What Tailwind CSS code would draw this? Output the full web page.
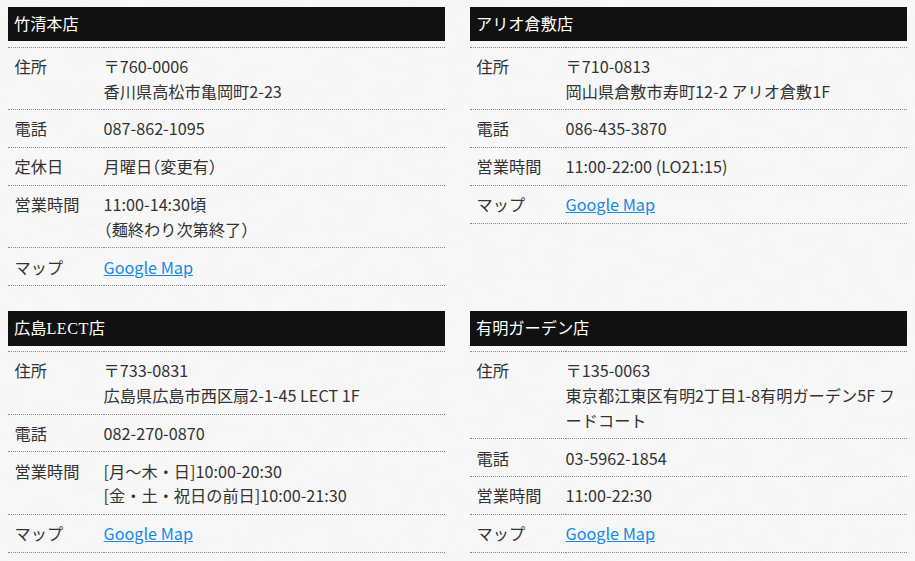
<!doctype html>
<html lang="ja">
<head>
<meta charset="UTF-8" />
<title>店舗情報</title>
<script src="https://cdn.jsdelivr.net/npm/@tailwindcss/browser@4"></script>
</head>
<body class="relative h-[561px] overflow-hidden bg-[#f8f8f8] font-['Noto_Sans_CJK_JP','Noto_Sans',sans-serif] text-[16.2px] leading-[24.6px] text-[#333]">
  <svg class="absolute inset-0 h-full w-full" aria-hidden="true">
    <filter id="paper" x="0" y="0" width="100%" height="100%">
      <feTurbulence type="fractalNoise" baseFrequency="0.04 0.06" numOctaves="4" seed="7" />
      <feColorMatrix values="0 0 0 0 0.5  0 0 0 0 0.5  0 0 0 0 0.5  0.6 0 0 0 -0.2" />
    </filter>
    <rect width="100%" height="100%" filter="url(#paper)" opacity="0.14" />
  </svg>

  <main class="relative grid grid-cols-2 gap-x-[25px] gap-y-[25px] px-2 pt-[6.6px]">
    <section>
      <h2 class="mb-[5.6px] h-[34.4px] bg-[#111] pl-[6px] font-['Liberation_Serif','Noto_Sans_CJK_JP',serif] text-[16.2px] leading-[36.4px] font-normal text-white">竹清本店</h2>
      <table class="w-full border-t border-dotted border-[#888]">
        <tbody>
          <tr class="border-b border-dotted border-[#888]">
            <th class="w-[95.6px] px-[6.6px] pt-[6.35px] pb-[5.95px] text-left align-top font-normal">住所</th>
            <td class="pt-[6.35px] pb-[5.95px] pr-[7px]">〒760-0006<br>香川県高松市亀岡町2-23</td>
          </tr>
          <tr class="border-b border-dotted border-[#888]">
            <th class="px-[6.6px] pt-[6.35px] pb-[5.95px] text-left align-top font-normal">電話</th>
            <td class="pt-[6.35px] pb-[5.95px] pr-[7px]">087-862-1095</td>
          </tr>
          <tr class="border-b border-dotted border-[#888]">
            <th class="px-[6.6px] pt-[6.35px] pb-[5.95px] text-left align-top font-normal">定休日</th>
            <td class="pt-[6.35px] pb-[5.95px] pr-[7px]">月曜日<span class="[font-feature-settings:'halt']">（</span>変更有<span class="[font-feature-settings:'halt']">）</span></td>
          </tr>
          <tr class="border-b border-dotted border-[#888]">
            <th class="px-[6.6px] pt-[6.35px] pb-[5.95px] text-left align-top font-normal">営業時間</th>
            <td class="pt-[6.35px] pb-[5.95px] pr-[7px]">11:00-14:30頃<br><span class="[font-feature-settings:'halt']">（</span>麺終わり次第終了<span class="[font-feature-settings:'halt']">）</span></td>
          </tr>
          <tr class="border-b border-dotted border-[#888]">
            <th class="px-[6.6px] pt-[6.35px] pb-[5.95px] text-left align-top font-normal">マップ</th>
            <td class="pt-[6.35px] pb-[5.95px] pr-[7px]"><a href="#" class="text-[#1589e0] underline">Google Map</a></td>
          </tr>
        </tbody>
      </table>
    </section>

    <section>
      <h2 class="mb-[5.6px] h-[34.4px] bg-[#111] pl-[6px] font-['Liberation_Serif','Noto_Sans_CJK_JP',serif] text-[16.2px] leading-[36.4px] font-normal text-white">アリオ倉敷店</h2>
      <table class="w-full border-t border-dotted border-[#888]">
        <tbody>
          <tr class="border-b border-dotted border-[#888]">
            <th class="w-[95.6px] px-[6.6px] pt-[6.35px] pb-[5.95px] text-left align-top font-normal">住所</th>
            <td class="pt-[6.35px] pb-[5.95px] pr-[7px]">〒710-0813<br>岡山県倉敷市寿町12-2 アリオ倉敷1F</td>
          </tr>
          <tr class="border-b border-dotted border-[#888]">
            <th class="px-[6.6px] pt-[6.35px] pb-[5.95px] text-left align-top font-normal">電話</th>
            <td class="pt-[6.35px] pb-[5.95px] pr-[7px]">086-435-3870</td>
          </tr>
          <tr class="border-b border-dotted border-[#888]">
            <th class="px-[6.6px] pt-[6.35px] pb-[5.95px] text-left align-top font-normal">営業時間</th>
            <td class="pt-[6.35px] pb-[5.95px] pr-[7px]">11:00-22:00 (LO21:15)</td>
          </tr>
          <tr class="border-b border-dotted border-[#888]">
            <th class="px-[6.6px] pt-[6.35px] pb-[5.95px] text-left align-top font-normal">マップ</th>
            <td class="pt-[6.35px] pb-[5.95px] pr-[7px]"><a href="#" class="text-[#1589e0] underline">Google Map</a></td>
          </tr>
        </tbody>
      </table>
    </section>

    <section>
      <h2 class="mb-[5.6px] h-[34.4px] bg-[#111] pl-[6px] font-['Liberation_Serif','Noto_Sans_CJK_JP',serif] text-[16.2px] leading-[36.4px] font-normal text-white">広島<span class="tracking-[0.5px]">LECT</span>店</h2>
      <table class="w-full border-t border-dotted border-[#888]">
        <tbody>
          <tr class="border-b border-dotted border-[#888]">
            <th class="w-[95.6px] px-[6.6px] pt-[6.35px] pb-[5.95px] text-left align-top font-normal">住所</th>
            <td class="pt-[6.35px] pb-[5.95px] pr-[7px]">〒733-0831<br>広島県広島市西区扇2-1-45 LECT 1F</td>
          </tr>
          <tr class="border-b border-dotted border-[#888]">
            <th class="px-[6.6px] pt-[6.35px] pb-[5.95px] text-left align-top font-normal">電話</th>
            <td class="pt-[6.35px] pb-[5.95px] pr-[7px]">082-270-0870</td>
          </tr>
          <tr class="border-b border-dotted border-[#888]">
            <th class="px-[6.6px] pt-[6.35px] pb-[5.95px] text-left align-top font-normal">営業時間</th>
            <td class="pt-[6.35px] pb-[5.95px] pr-[7px]">[月～木・日]10:00-20:30<br>[金・土・祝日の前日]10:00-21:30</td>
          </tr>
          <tr class="border-b border-dotted border-[#888]">
            <th class="px-[6.6px] pt-[6.35px] pb-[5.95px] text-left align-top font-normal">マップ</th>
            <td class="pt-[6.35px] pb-[5.95px] pr-[7px]"><a href="#" class="text-[#1589e0] underline">Google Map</a></td>
          </tr>
        </tbody>
      </table>
    </section>

    <section>
      <h2 class="mb-[5.6px] h-[34.4px] bg-[#111] pl-[6px] font-['Liberation_Serif','Noto_Sans_CJK_JP',serif] text-[16.2px] leading-[36.4px] font-normal text-white">有明ガーデン店</h2>
      <table class="w-full border-t border-dotted border-[#888]">
        <tbody>
          <tr class="border-b border-dotted border-[#888]">
            <th class="w-[95.6px] px-[6.6px] pt-[6.35px] pb-[5.95px] text-left align-top font-normal">住所</th>
            <td class="pt-[6.35px] pb-[5.95px] pr-[7px]">〒135-0063<br>東京都江東区有明2丁目1-8有明ガーデン5F フードコート</td>
          </tr>
          <tr class="border-b border-dotted border-[#888]">
            <th class="px-[6.6px] pt-[6.35px] pb-[5.95px] text-left align-top font-normal">電話</th>
            <td class="pt-[6.35px] pb-[5.95px] pr-[7px]">03-5962-1854</td>
          </tr>
          <tr class="border-b border-dotted border-[#888]">
            <th class="px-[6.6px] pt-[6.35px] pb-[5.95px] text-left align-top font-normal">営業時間</th>
            <td class="pt-[6.35px] pb-[5.95px] pr-[7px]">11:00-22:30</td>
          </tr>
          <tr class="border-b border-dotted border-[#888]">
            <th class="px-[6.6px] pt-[6.35px] pb-[5.95px] text-left align-top font-normal">マップ</th>
            <td class="pt-[6.35px] pb-[5.95px] pr-[7px]"><a href="#" class="text-[#1589e0] underline">Google Map</a></td>
          </tr>
        </tbody>
      </table>
    </section>
  </main>
</body>
</html>
